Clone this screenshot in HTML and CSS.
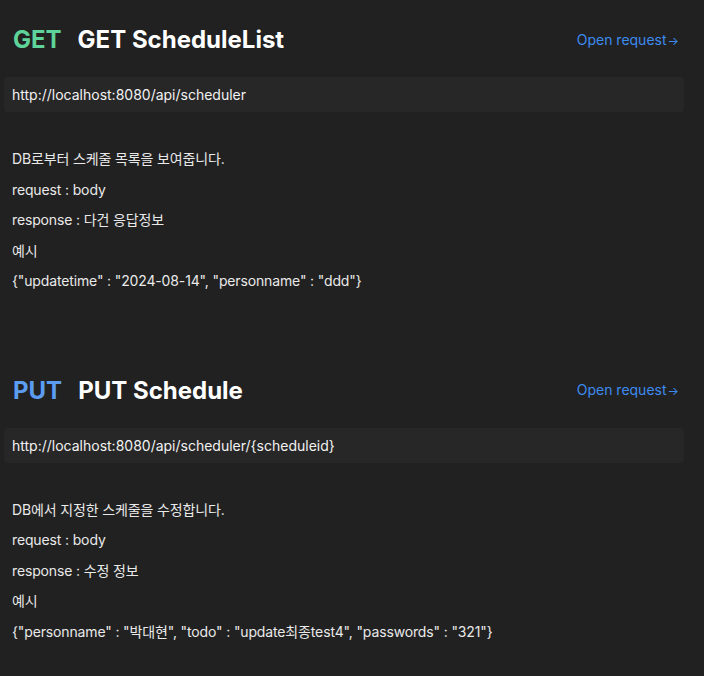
FILE: index.html
```html
<!DOCTYPE html>
<html lang="ko">
<head>
<meta charset="utf-8">
<link rel="stylesheet" href="styles.css">
</head>
<body>
<main class="doc">
  <section class="endpoint">
    <header class="ep-head">
      <h2 class="ep-title"><span class="method get">GET</span><span class="name">GET ScheduleList</span></h2>
      <a class="open" href="#">Open request<span class="arrow">→</span></a>
    </header>
    <div class="url">http://localhost:8080/api/scheduler</div>
    <div class="desc">
      <p>DB로부터 스케줄 목록을 보여줍니다.</p>
      <p>request : body</p>
      <p>response : 다건 응답정보</p>
      <p>예시</p>
      <p>{"updatetime" : "2024-08-14", "personname" : "ddd"}</p>
    </div>
  </section>
  <section class="endpoint">
    <header class="ep-head">
      <h2 class="ep-title"><span class="method put">PUT</span><span class="name">PUT Schedule</span></h2>
      <a class="open" href="#">Open request<span class="arrow">→</span></a>
    </header>
    <div class="url">http://localhost:8080/api/scheduler/{scheduleid}</div>
    <div class="desc">
      <p>DB에서 지정한 스케줄을 수정합니다.</p>
      <p>request : body</p>
      <p>response : 수정 정보</p>
      <p>예시</p>
      <p>{"personname" : "박대현", "todo" : "update최종test4", "passwords" : "321"}</p>
    </div>
  </section>
</main>
</body>
</html>
```

FILE: styles.css
```css
html, body {
  margin: 0;
  padding: 0;
  background: #212121;
}
body {
  font-family: Inter, "Noto Sans CJK KR", sans-serif;
  color: #e9e9e9;
}
.doc {
  width: 680px;
  padding: 24px 0 0 4px;
}
.endpoint {
  margin-bottom: 78px;
}
.ep-head {
  display: flex;
  align-items: center;
  justify-content: space-between;
  height: 32px;
  padding: 0 5px 0 9px;
}
.ep-title {
  margin: 0;
  font-size: 24px;
  line-height: 32px;
  font-weight: 700;
  display: flex;
  gap: 16px;
}
.method.get { color: #5fd49a; }
.method.put { color: #5c9df2; }
.name { color: #ffffff; }
.open {
  color: #3d8bf0;
  text-decoration: none;
  font-size: 14px;
  line-height: 20px;
}
.arrow {
  font-size: 12px;
  margin-left: 1px;
}
.url {
  margin-top: 21px;
  height: 35px;
  box-sizing: border-box;
  padding: 0 8px;
  display: flex;
  align-items: center;
  background: #272727;
  border-radius: 4px;
  font-size: 14px;
  color: #f2f2f2;
}
.desc {
  margin-top: 32px;
  padding-left: 8px;
  font-size: 14px;
  letter-spacing: -0.14px;
}
.desc p {
  margin: 0;
  line-height: 30.5px;
}
```
